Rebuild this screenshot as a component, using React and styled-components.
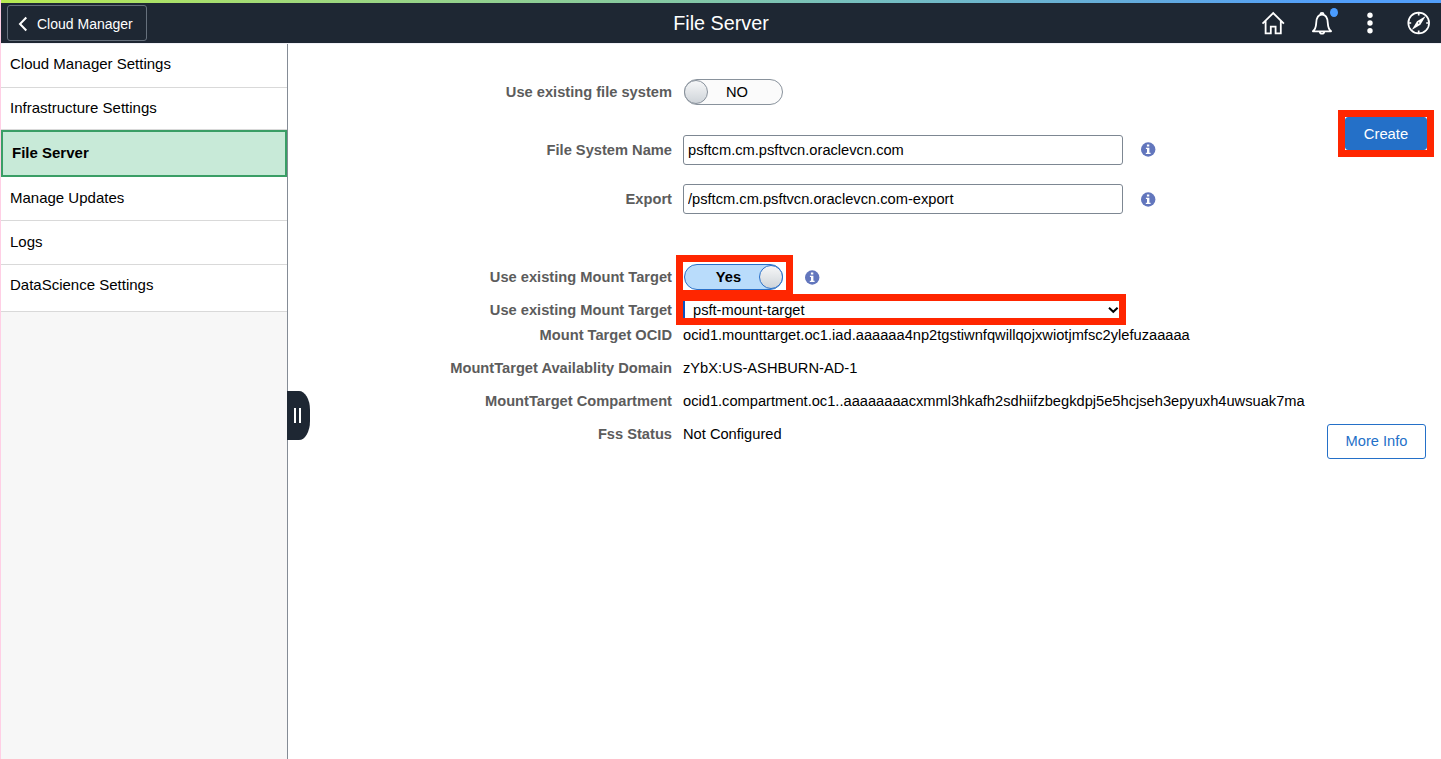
import React from "react";
import styled, { createGlobalStyle, css } from "styled-components";

const Global = createGlobalStyle`
  *, *::before, *::after { box-sizing: border-box; }
  body {
    margin: 0;
    background: #fff;
    color: #000;
    font-family: "Liberation Sans", Arial, sans-serif;
    font-size: 15px;
    line-height: 18px;
    overflow: hidden;
  }
`;

const Page = styled.div`
  display: flex;
  flex-direction: column;
  height: 759px;
  width: 1441px;
  border-left: 1px solid #ffcfe5;
`;

const Stripe = styled.div`
  flex: none;
  height: 3px;
  background: linear-gradient(90deg, #b8ea52 0%, #a0d97a 20%, #86c9a0 45%, #76bfc0 60%, #62aade 80%, #529ffb 92%, #529ffb 100%);
`;

const Header = styled.header`
  flex: none;
  display: grid;
  grid-template-columns: 1fr auto 1fr;
  align-items: center;
  height: 41px;
  padding: 0 6px;
  background: #1e2733;
  border-bottom: 1px solid #f1f1f7;
  color: #fff;
`;

const BackButton = styled.button`
  justify-self: start;
  display: flex;
  align-items: center;
  gap: 9px;
  width: 140px;
  height: 36px;
  padding: 2px 0 0 10px;
  border: 1px solid #66707c;
  border-radius: 3px;
  background: transparent;
  color: #fff;
  font: 14px "Liberation Sans", Arial, sans-serif;
  white-space: nowrap;
`;

const Title = styled.h1`
  margin: 0;
  font-size: 19.8px;
  font-weight: 400;
  line-height: 24px;
`;

const Actions = styled.div`
  justify-self: end;
  display: flex;
  align-items: center;
  gap: 24px;
  padding-right: 4px;
`;

const Action = styled.div`
  position: relative;
  display: flex;
  width: 24.5px;
  height: 26px;
  align-items: center;
  justify-content: center;
`;

const Badge = styled.span`
  position: absolute;
  top: -2px;
  right: -4px;
  width: 8px;
  height: 9px;
  border-radius: 50%;
  background: #4a9cff;
`;

const Body = styled.div`
  flex: 1;
  display: flex;
  min-height: 0;
`;

const Sidebar = styled.nav`
  position: relative;
  flex: none;
  width: 287px;
  background: #f7f7f7;
  border-right: 1px solid #858c96;
`;

const NavItem = styled.div`
  height: ${(p) => p.$height}px;
  padding: ${(p) => p.$top}px 0 0 9px;
  background: #fff;
  border-bottom: 1px solid #d9d9d9;
  ${(p) =>
    p.$active &&
    css`
      background: #c8ead8;
      border: 2px solid #3a9e66;
      font-weight: 700;
    `}
`;

const Handle = styled.div`
  position: absolute;
  left: 286px;
  top: 347px;
  display: flex;
  align-items: center;
  gap: 3px;
  width: 23px;
  height: 49px;
  padding-left: 7px;
  border-radius: 0 11px 11px 0 / 0 19px 19px 0;
  background: #1e2733;
  &::before, &::after {
    content: "";
    width: 2px;
    height: 15px;
    background: #fff;
  }
`;

const Main = styled.main`
  flex: 1;
  display: flex;
  justify-content: space-between;
  padding: 35px 14px 0 0;
`;

const Form = styled.div`
  display: flex;
  flex-direction: column;
  font-size: 14.67px;
`;

const Row = styled.div`
  display: grid;
  grid-template-columns: 384px auto;
  column-gap: 11px;
  align-items: center;
  height: ${(p) => p.$height}px;
  margin-top: ${(p) => p.$gap || 0}px;
`;

const Label = styled.label`
  justify-self: end;
  padding-top: ${(p) => p.$drop || 0}px;
  color: #5c5c5c;
  font-weight: 700;
  white-space: nowrap;
`;

const Field = styled.div`
  position: relative;
  display: flex;
  align-items: center;
  gap: ${(p) => p.$gap || 18}px;
  white-space: nowrap;
`;

const Input = styled.input`
  width: 440px;
  height: 30px;
  padding: 0 4px 1px;
  border: 1px solid #7d8792;
  border-radius: 3px;
  background: #fff;
  color: #000;
  font: 14.67px "Liberation Sans", Arial, sans-serif;
`;

const Switch = styled.div`
  display: flex;
  flex-direction: ${(p) => (p.$on ? "row-reverse" : "row")};
  align-items: center;
  width: 99px;
  height: 26px;
  margin-left: 1px;
  border: 1px solid ${(p) => (p.$on ? "#2a70c8" : "#89929c")};
  border-radius: 13px;
  background: ${(p) => (p.$on ? "#b9dcfb" : "#fbfbfb")};
  font-weight: ${(p) => (p.$on ? 700 : 400)};
`;

const Knob = styled.span`
  flex: none;
  width: 24px;
  height: 24px;
  margin: 0 -1px;
  border: 1px solid ${(p) => (p.$on ? "#2a70c8" : "#89929c")};
  border-radius: 50%;
  background: linear-gradient(#f6f7f8, #cfd4d9);
`;

const SwitchText = styled.span`
  flex: 1;
  text-align: center;
  padding-left: ${(p) => (p.$on ? 12 : 0)}px;
  padding-right: ${(p) => (p.$on ? 0 : 15)}px;
`;

const Select = styled.div`
  display: flex;
  align-items: center;
  justify-content: space-between;
  width: 436px;
  height: 18px;
  padding: 1px 0 0 8px;
  border-left: 2px solid #0a50c0;
`;

const Highlight = styled.span`
  position: absolute;
  inset: ${(p) => p.$inset};
  width: ${(p) => (p.$width ? `${p.$width}px` : "auto")};
  border: 7px solid #ff2600;
  pointer-events: none;
`;

const Value = styled.span`
  white-space: nowrap;
`;

const Side = styled.div`
  display: flex;
  flex-direction: column;
  align-items: flex-end;
  justify-content: space-between;
  height: 380px;
  padding-top: 38px;
`;

const ButtonWrap = styled.div`
  position: relative;
`;

const Button = styled.button`
  display: block;
  width: ${(p) => p.$width}px;
  height: ${(p) => p.$height}px;
  margin-right: ${(p) => (p.$primary ? 0 : 1)}px;
  padding: 0 0 ${(p) => (p.$primary ? 0 : 2)}px;
  border: 1px solid #2470c8;
  border-radius: 3px;
  background: ${(p) => (p.$primary ? "#2470c8" : "#fff")};
  color: ${(p) => (p.$primary ? "#fff" : "#2470c8")};
  font: ${(p) => (p.$primary ? 14.8 : 14.67)}px "Liberation Sans", Arial, sans-serif;
`;

const InfoSvg = styled.svg`
  flex: none;
  margin-top: ${(p) => p.$shift || 0}px;
`;

const InfoIcon = ({ shift }) => (
  <InfoSvg $shift={shift} width="15" height="15" viewBox="0.5 0 15 15">
    <circle cx="7.7" cy="7.5" r="7.2" fill="#6276bd" />
    <path d="M6.400 2.600h2.400v2H6.400zM5.400 5.800h3.500v4.900h1.200V12H5.300v-1.300h1.200V7.100H5.400z" fill="#fff" />
  </InfoSvg>
);

const HomeIcon = () => (
  <svg width="24" height="24" viewBox="0 0 24 24" fill="none" stroke="#fff" strokeWidth="1.8">
    <path d="M1.5 12.6 12.2 2l10.700 10.600M4.600 10v12.400h5.200v-6.800h4.800v6.800h5.200V10" />
  </svg>
);

const BellIcon = () => (
  <svg width="22" height="24" viewBox="0 0 22 24" fill="none" stroke="#fff" strokeWidth="1.8">
    <path d="M1.900 20.300c2.800-2.200 3.100-4.600 3.300-8.200C5.400 7 7.200 3.700 11 3.700s5.600 3.300 5.800 8.400c.2 3.600.5 6 3.300 8.200z" strokeLinejoin="round" />
    <path d="M9.400 3.200a1.600 1.300 0 0 1 3.200 0M8.800 20.800a2.200 1.900 0 0 0 4.400 0" />
  </svg>
);

const DotsIcon = () => (
  <svg width="8" height="24" viewBox="0 0 8 24" fill="#fff">
    <circle cx="4" cy="4.2" r="2.7" />
    <circle cx="4" cy="12" r="2.7" />
    <circle cx="4" cy="19.800" r="2.7" />
  </svg>
);

const CompassIcon = () => (
  <svg width="24" height="24" viewBox="0.3 0 24 24" fill="none" stroke="#fff" strokeWidth="1.7">
    <circle cx="12" cy="12" r="10.400" />
    <path d="M12 2v2.500M12 19.500V22M2 12h2.500M19.500 12H22" />
    <path d="M19 5 13.700 13.700 5 19 10.300 10.300z" fill="#fff" stroke="none" />
    <circle cx="12" cy="12" r="0.7" fill="#1e2733" stroke="none" />
  </svg>
);

const ChevronLeft = () => (
  <svg width="10" height="16" viewBox="0 0 10 16" fill="none" stroke="#fff" strokeWidth="2">
    <path d="M8.300 1.500 2 8l6.300 6.500" />
  </svg>
);

const ChevronDown = () => (
  <svg width="11" height="8" viewBox="0 0 11 8" fill="none" stroke="#000" strokeWidth="2">
    <path d="M1 1.800 5.300 5.800l4.300-4" />
  </svg>
);

const NAV = [
  { text: "Cloud Manager Settings", height: 44, top: 11 },
  { text: "Infrastructure Settings", height: 42, top: 11 },
  { text: "File Server", height: 47, top: 12, active: true },
  { text: "Manage Updates", height: 44, top: 12 },
  { text: "Logs", height: 44, top: 12 },
  { text: "DataScience Settings", height: 47, top: 11 },
];

export default function App() {
  return (
    <>
      <Global />
      <Page>
        <Stripe />
        <Header>
          <BackButton>
            <ChevronLeft />
            Cloud Manager
          </BackButton>
          <Title>File Server</Title>
          <Actions>
            <Action><HomeIcon /></Action>
            <Action><BellIcon /><Badge /></Action>
            <Action><DotsIcon /></Action>
            <Action><CompassIcon /></Action>
          </Actions>
        </Header>
        <Body>
          <Sidebar>
            {NAV.map((n) => (
              <NavItem key={n.text} $height={n.height} $top={n.top} $active={n.active}>
                {n.text}
              </NavItem>
            ))}
            <Handle />
          </Sidebar>
          <Main>
            <Form>
              <Row $height={26}>
                <Label>Use existing file system</Label>
                <Field>
                  <Switch><Knob /><SwitchText>NO</SwitchText></Switch>
                </Field>
              </Row>
              <Row $height={30} $gap={30}>
                <Label>File System Name</Label>
                <Field><Input defaultValue="psftcm.cm.psftvcn.oraclevcn.com" /><InfoIcon shift={-2} /></Field>
              </Row>
              <Row $height={30} $gap={19}>
                <Label>Export</Label>
                <Field><Input defaultValue="/psftcm.cm.psftvcn.oraclevcn.com-export" /><InfoIcon /></Field>
              </Row>
              <Row $height={26} $gap={50}>
                <Label>Use existing Mount Target</Label>
                <Field $gap={22}>
                  <Switch $on><Knob $on /><SwitchText $on>Yes</SwitchText></Switch>
                  <InfoIcon />
                  <Highlight $inset="-9px auto -7px -7px" $width={117} />
                </Field>
              </Row>
              <Row $height={20} $gap={9}>
                <Label $drop={2}>Use existing Mount Target</Label>
                <Field>
                  <Select>psft-mount-target<ChevronDown /></Select>
                  <Highlight $inset="-6px auto -7px -7px" $width={450} />
                </Field>
              </Row>
              <Row $height={18} $gap={7}>
                <Label>Mount Target OCID</Label>
                <Value>ocid1.mounttarget.oc1.iad.aaaaaa4np2tgstiwnfqwillqojxwiotjmfsc2ylefuzaaaaa</Value>
              </Row>
              <Row $height={18} $gap={15}>
                <Label>MountTarget Availablity Domain</Label>
                <Value>zYbX:US-ASHBURN-AD-1</Value>
              </Row>
              <Row $height={18} $gap={15}>
                <Label>MountTarget Compartment</Label>
                <Value>ocid1.compartment.oc1..aaaaaaaacxmml3hkafh2sdhiifzbegkdpj5e5hcjseh3epyuxh4uwsuak7ma</Value>
              </Row>
              <Row $height={18} $gap={15}>
                <Label>Fss Status</Label>
                <Value>Not Configured</Value>
              </Row>
            </Form>
            <Side>
              <ButtonWrap>
                <Button $primary $width={82} $height={33}>Create</Button>
                <Highlight $inset="-7px" />
              </ButtonWrap>
              <Button $width={99} $height={35}>More Info</Button>
            </Side>
          </Main>
        </Body>
      </Page>
    </>
  );
}
